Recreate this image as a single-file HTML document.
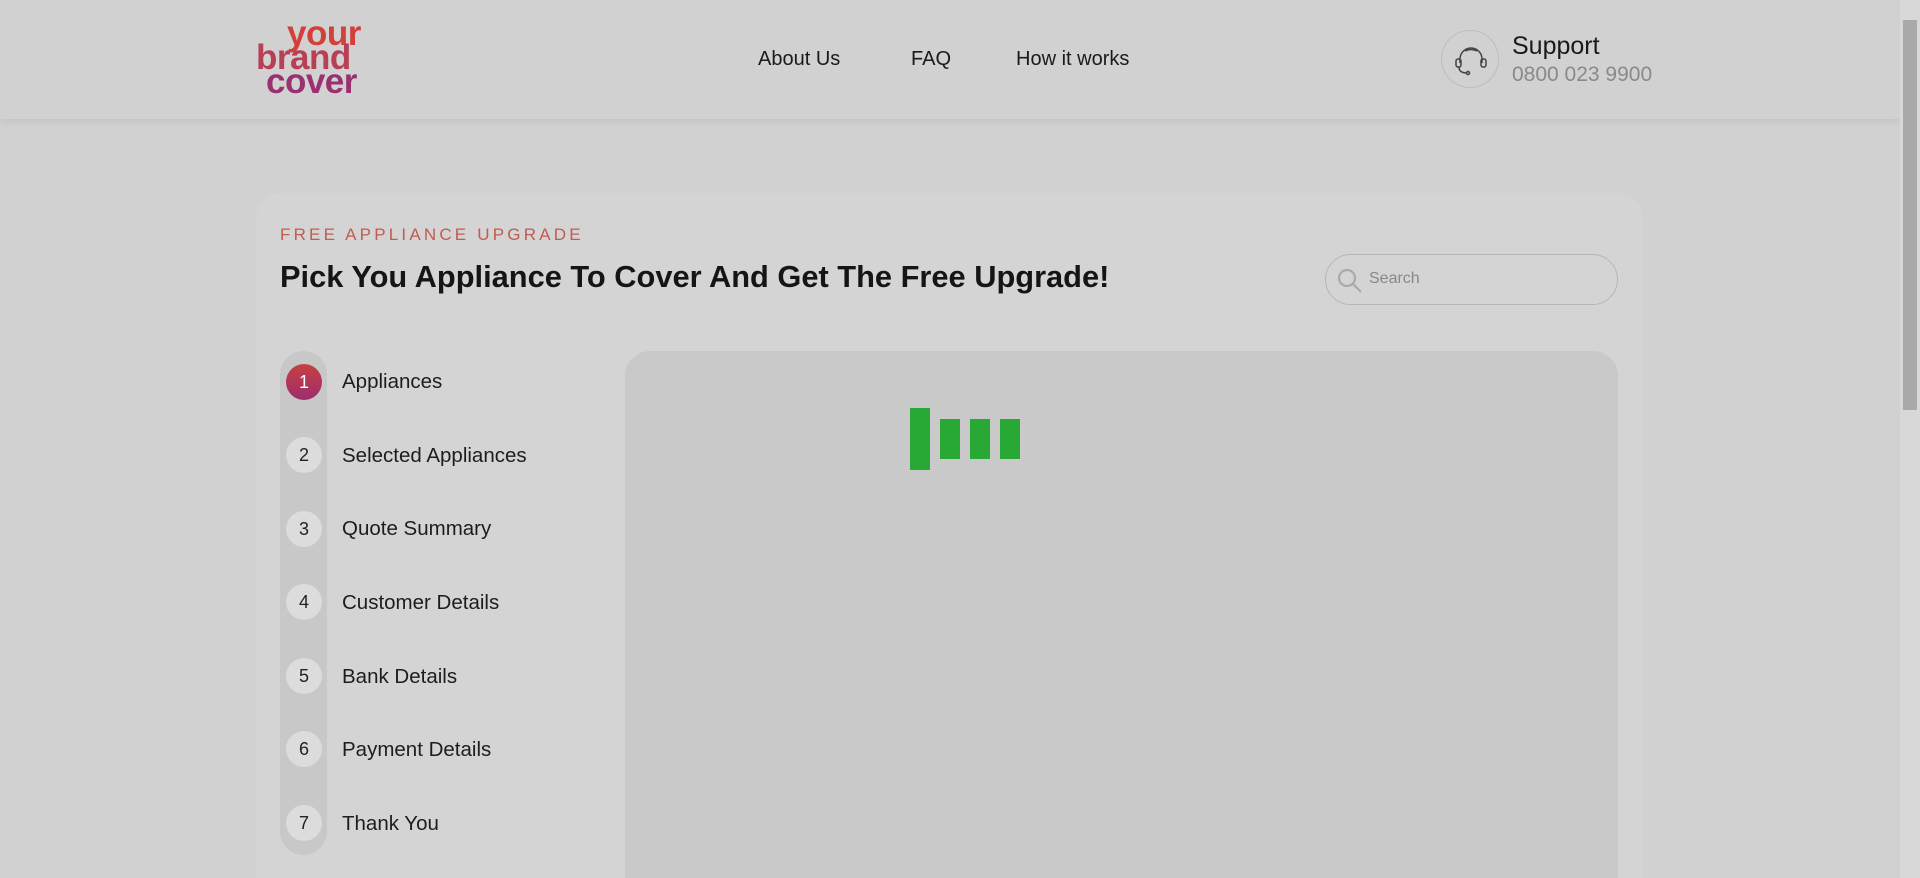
<!DOCTYPE html>
<html><head><meta charset="utf-8"><style>
*{margin:0;padding:0;box-sizing:border-box}
html,body{width:1920px;height:878px;overflow:hidden}
body{background:#d1d1d1;font-family:"Liberation Sans",sans-serif;position:relative;color:#1a1a1a}
.hdr{position:absolute;left:0;top:0;width:1900px;height:119px;background:#d1d1d1;box-shadow:0 2px 8px rgba(0,0,0,.08)}
.sb{position:absolute;right:0;top:0;width:20px;height:878px;background:#d8d8d8}
.sb i{position:absolute;left:3px;top:20px;width:14px;height:390px;background:#a9a9a9}
.logo{position:absolute;left:256px;top:22px;font-weight:bold;font-size:35px;line-height:24px;letter-spacing:-0.5px}
.nav{position:absolute;top:48px;font-size:20px;color:#1a1a1a}
.sup{position:absolute;left:1441px;top:30px;width:58px;height:58px;border:1px solid #bdbdbd;border-radius:50%}
.card{position:absolute;left:256px;top:193px;width:1387px;height:685px;background:#d4d4d4;border-radius:25px 25px 0 0}
.lab{position:absolute;left:280px;top:225px;font-size:17px;letter-spacing:3.2px;color:#c25b52}
.ttl{position:absolute;left:280px;top:259px;font-size:30.8px;font-weight:bold;color:#151515}
.srch{position:absolute;left:1325px;top:254px;width:293px;height:51px;border:1px solid #b6b6b6;border-radius:26px}
.rail{position:absolute;left:280px;top:351px;width:47px;height:504px;background:#c8c8c8;border-radius:24px}
.st{position:absolute;left:286px;width:36px;height:36px;border-radius:50%;background:#dcdcdc;font-size:18px;text-align:center;line-height:36px;color:#222}
.sl{position:absolute;left:342px;font-size:20.5px;color:#1d1d1d}
.pan{position:absolute;left:625px;top:351px;width:993px;height:527px;background:#c9c9c9;border-radius:25px 25px 0 0}
.bar{position:absolute;width:20px;background:#28a834}
</style></head><body>
<div class="hdr"></div>
<div class="logo"><div style="padding-left:31px;color:#d3403a">your</div><div style="color:#b83f55">brand</div><div style="padding-left:10px;color:#9a3070">cover</div></div>
<div class="nav" style="left:758px">About Us</div>
<div class="nav" style="left:911px">FAQ</div>
<div class="nav" style="left:1016px">How it works</div>
<div class="sup"><svg width="58" height="58" viewBox="0 0 58 58" fill="none" stroke="#444" stroke-width="1.5"><path d="M18 32v-4a11 11 0 0 1 22 0v4"/><path d="M23 20q6-3 12 0"/><rect x="14" y="28" width="5" height="8" rx="2"/><rect x="39" y="28" width="5" height="8" rx="2"/><path d="M17 36c0 4 3 6 8 6"/><circle cx="26" cy="42" r="1.5"/></svg></div>
<div style="position:absolute;left:1512px;top:32px;font-size:25px;color:#1a1a1a">Support</div>
<div style="position:absolute;left:1512px;top:63px;font-size:21px;color:#8a8a8a">0800 023 9900</div>
<div class="card"></div>
<div class="lab">FREE APPLIANCE UPGRADE</div>
<div class="ttl">Pick You Appliance To Cover And Get The Free Upgrade!</div>
<div class="srch"><svg style="position:absolute;left:11px;top:13px" width="26" height="26" viewBox="0 0 26 26" fill="none" stroke="#aaa" stroke-width="2.2"><circle cx="10" cy="10" r="8"/><path d="M16 16l8 8"/></svg><span style="position:absolute;left:43px;top:15px;font-size:16px;color:#888">Search</span></div>
<div class="rail"></div>
<div class="st" style="top:364px;background:linear-gradient(#c9403f,#9b2d6e);color:#fff">1</div><div class="sl" style="top:370px">Appliances</div>
<div class="st" style="top:437px">2</div><div class="sl" style="top:444px">Selected Appliances</div>
<div class="st" style="top:511px">3</div><div class="sl" style="top:517px">Quote Summary</div>
<div class="st" style="top:584px">4</div><div class="sl" style="top:591px">Customer Details</div>
<div class="st" style="top:658px">5</div><div class="sl" style="top:665px">Bank Details</div>
<div class="st" style="top:731px">6</div><div class="sl" style="top:738px">Payment Details</div>
<div class="st" style="top:805px">7</div><div class="sl" style="top:812px">Thank You</div>
<div class="pan"></div>
<div class="bar" style="left:910px;top:408px;height:62px"></div>
<div class="bar" style="left:940px;top:419px;height:40px"></div>
<div class="bar" style="left:970px;top:419px;height:40px"></div>
<div class="bar" style="left:1000px;top:419px;height:40px"></div>
<div class="sb"><i></i></div>
</body></html>
